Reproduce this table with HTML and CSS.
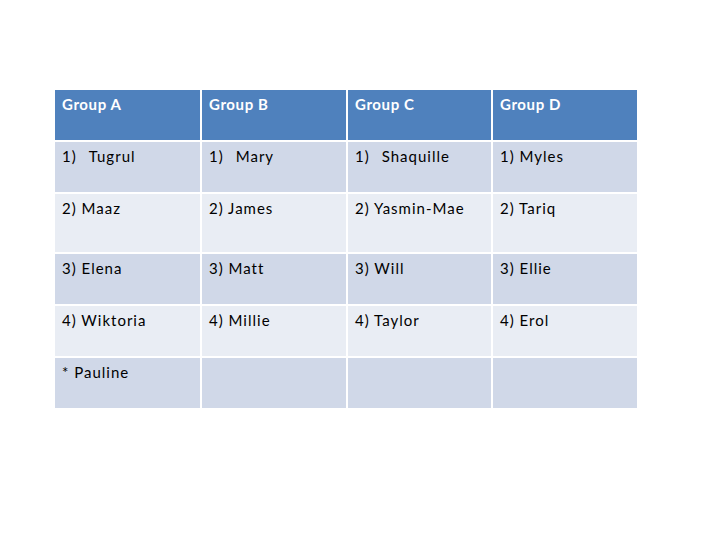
FILE: index.html
```html
<!DOCTYPE html>
<html>
<head>
<meta charset="utf-8">
<link rel="stylesheet" href="styles.css">
</head>
<body>
<div class="page">
  <div class="grid">
    <div class="cell head">Group A</div>
    <div class="cell head">Group B</div>
    <div class="cell head">Group C</div>
    <div class="cell head">Group D</div>

    <div class="cell odd">1)<span class="sp">Tugrul</span></div>
    <div class="cell odd">1)<span class="sp">Mary</span></div>
    <div class="cell odd">1)<span class="sp">Shaquille</span></div>
    <div class="cell odd">1) Myles</div>

    <div class="cell even">2) Maaz</div>
    <div class="cell even">2) James</div>
    <div class="cell even">2) Yasmin-Mae</div>
    <div class="cell even">2) Tariq</div>

    <div class="cell odd">3) Elena</div>
    <div class="cell odd">3) Matt</div>
    <div class="cell odd">3) Will</div>
    <div class="cell odd">3) Ellie</div>

    <div class="cell even">4) Wiktoria</div>
    <div class="cell even">4) Millie</div>
    <div class="cell even">4) Taylor</div>
    <div class="cell even">4) Erol</div>

    <div class="cell odd">* Pauline</div>
    <div class="cell odd"></div>
    <div class="cell odd"></div>
    <div class="cell odd"></div>
  </div>
</div>
</body>
</html>
```

FILE: styles.css
```css
html, body {
  margin: 0;
  padding: 0;
  background: #ffffff;
}
.page {
  width: 720px;
  height: 540px;
  padding: 90px 0 0 55px;
  box-sizing: border-box;
}
.grid {
  display: grid;
  grid-template-columns: 145px 144px 143px 144px;
  grid-template-rows: 50px 50px 58px 50px 50px 50px;
  gap: 2px;
  font-family: Lato, "Open Sans", sans-serif;
  font-size: 15px;
  letter-spacing: 1px;
  color: #000;
}
.cell {
  padding: 5px 7px;
  line-height: 18px;
  box-sizing: border-box;
}
.sp {
  margin-left: 12px;
}
.head {
  background: #4f81bd;
  color: #fff;
  font-weight: bold;
  letter-spacing: 0.6px;
}
.odd {
  background: #d0d8e8;
}
.even {
  background: #e9edf4;
}
```
